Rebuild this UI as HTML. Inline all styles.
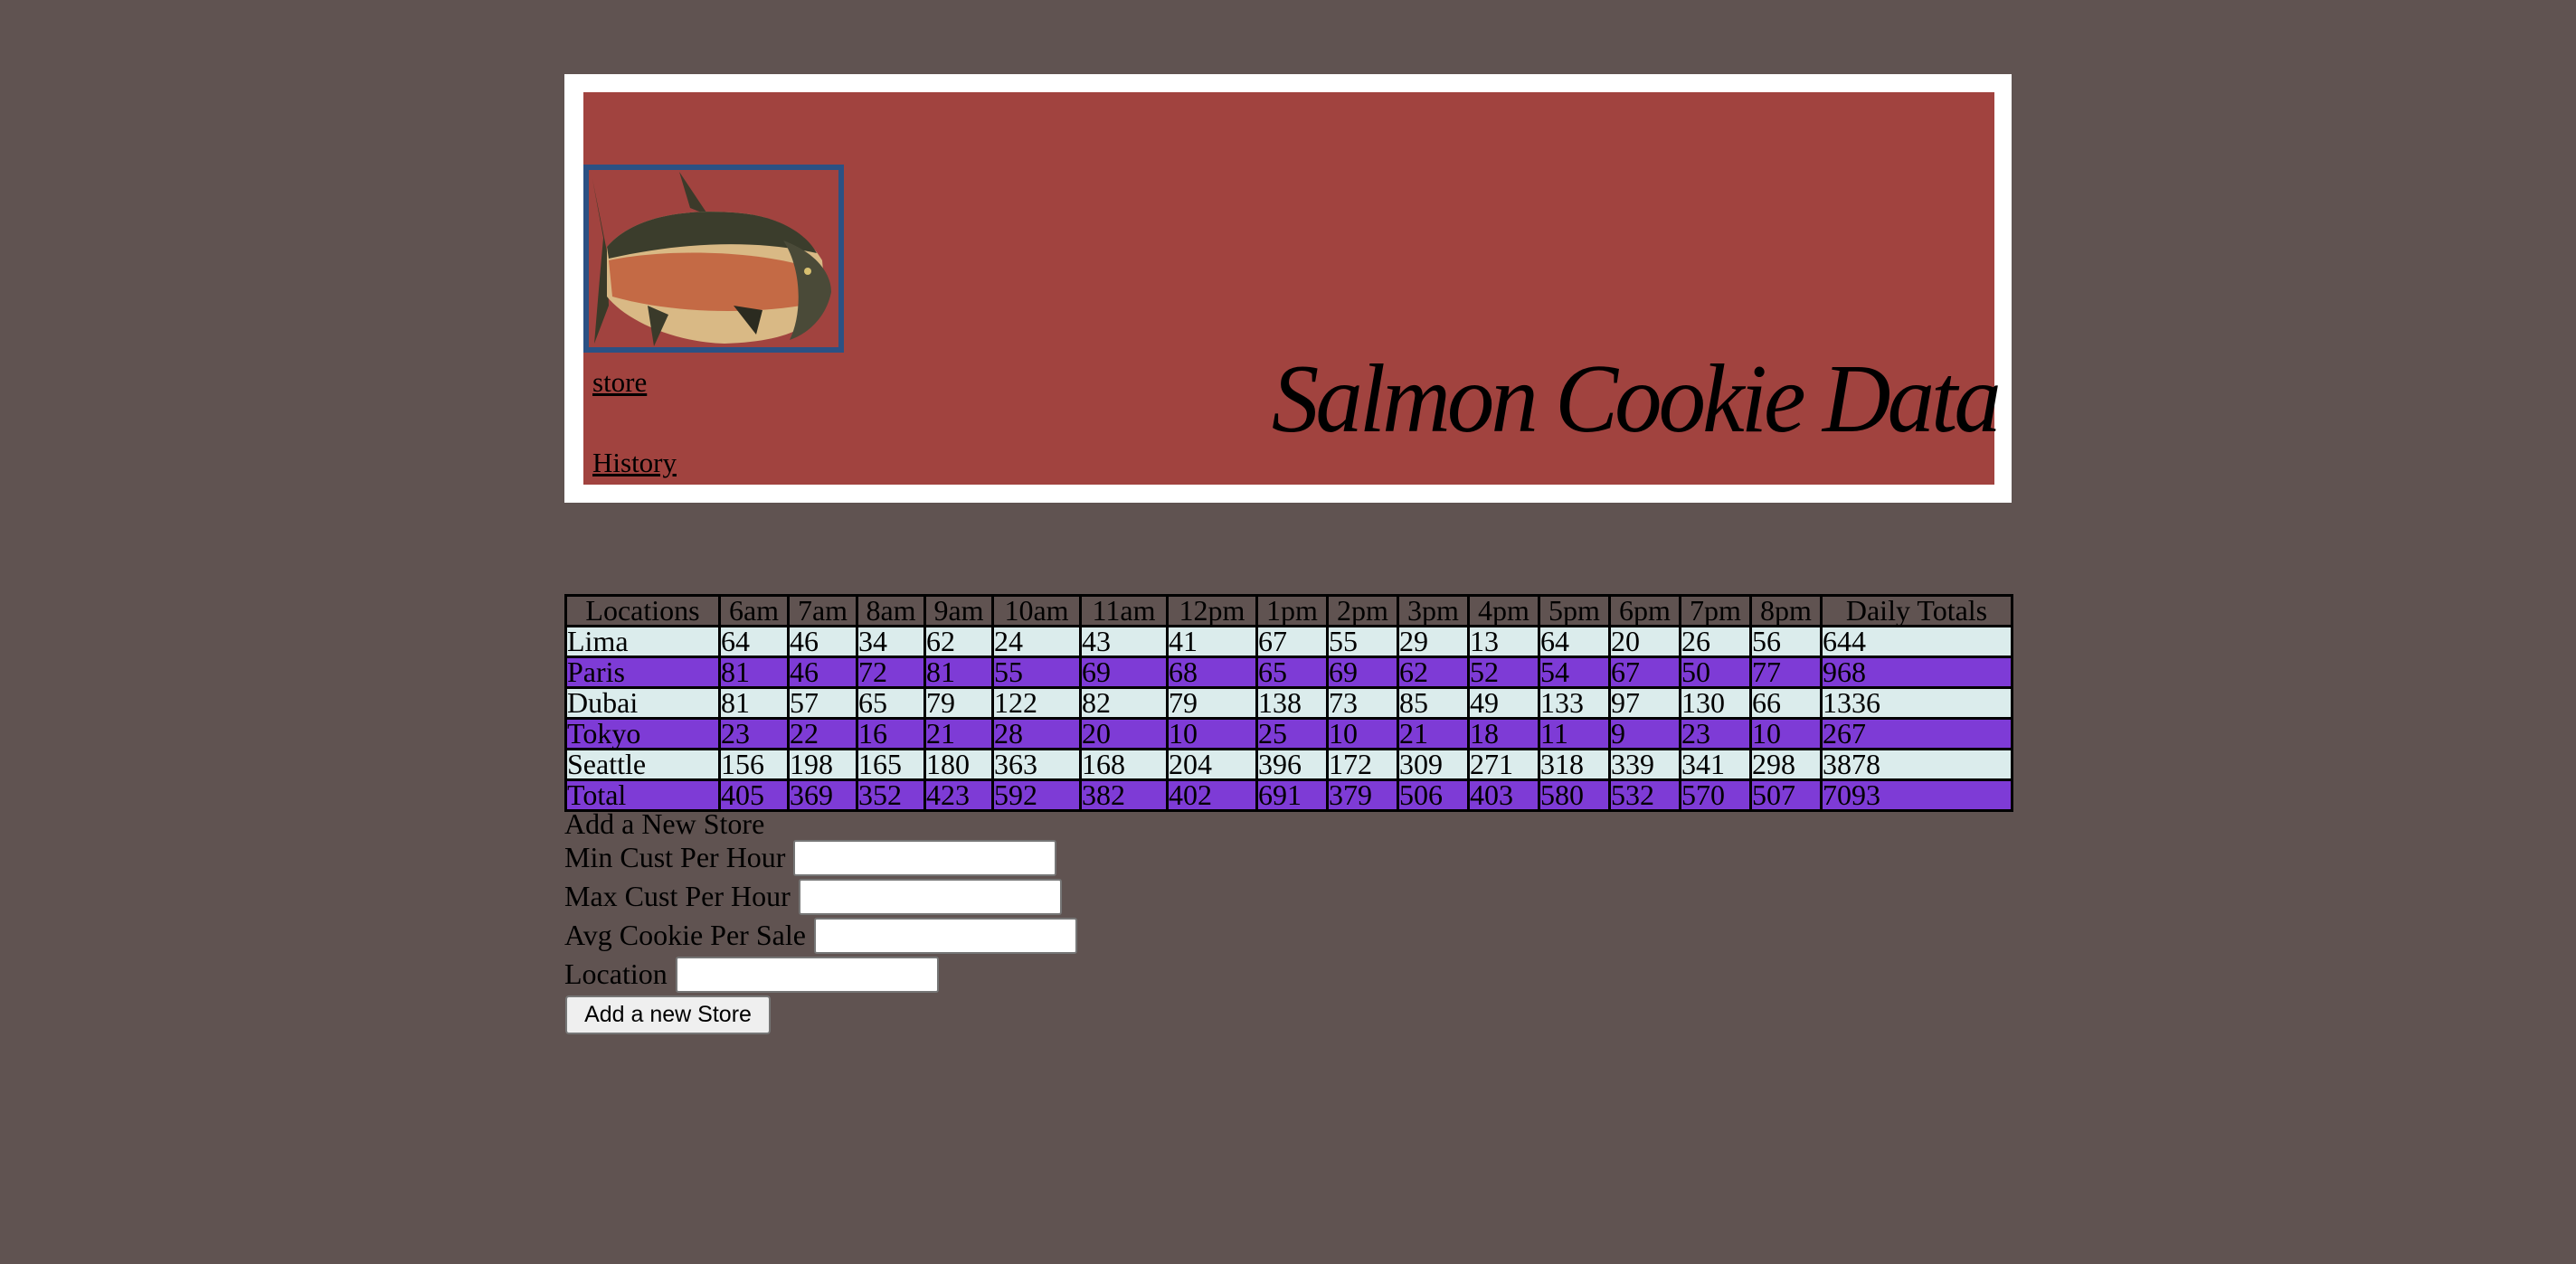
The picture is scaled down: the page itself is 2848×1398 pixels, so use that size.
<!DOCTYPE html>
<html><head><meta charset="utf-8"><style>
html,body{margin:0;padding:0;}
body{width:2848px;height:1398px;background:#605351;position:relative;overflow:hidden;font-family:"Liberation Serif",serif;color:#000;}
#hdr{position:absolute;left:624px;top:82px;width:1600px;height:474px;background:#fff;}
#red{position:absolute;left:21px;top:20px;width:1560px;height:434px;background:#a1433f;}
#fish{position:absolute;left:0;top:80px;width:276px;height:196px;border:6px solid #2b5184;}
.lnk{position:absolute;left:10px;font-size:31px;text-decoration:underline;}
#title{position:absolute;right:-4px;top:278px;font-size:108px;font-style:italic;white-space:nowrap;letter-spacing:-4px;transform:scaleX(0.97);transform-origin:right;}
table{position:absolute;left:624px;top:657px;border-collapse:collapse;table-layout:fixed;width:1600px;font-size:32px;}
td,th{border:3px solid #000;height:31px;padding:0;line-height:31px;text-align:left;font-weight:normal;white-space:nowrap;overflow:hidden;}
th{text-align:center;background:#605351;}
tr.l td{background:#dbecec;}
tr.p td{background:#7e3bd6;}
.f{position:absolute;left:624px;font-size:32px;white-space:nowrap;}
.in{position:absolute;height:36px;width:287px;background:#fff;border:2px solid #767676;border-radius:3px;}
#btn{position:absolute;left:625px;top:1101px;width:223px;height:39px;background:#efefef;border:2px solid #767676;border-radius:4px;font-family:"Liberation Sans",sans-serif;font-size:25px;line-height:39px;text-align:center;}
</style></head><body>
<div id="hdr"><div id="red">
<div id="fish"><svg width="276" height="196" viewBox="0 0 276 196">
<path d="M4 10 L16 75 L12 120 L6 192 L22 150 L20 90 Z" fill="#3a3a28"/>
<path d="M100 2 L112 42 L132 50 Z" fill="#3c3a2a"/>
<path d="M20 85 C50 50 110 42 170 48 C210 52 240 70 258 100 L262 145 C250 175 215 190 150 192 C90 190 40 165 20 140 Z" fill="#d9b985"/>
<path d="M20 85 C50 50 110 42 170 48 C210 52 240 70 252 92 C190 78 110 78 22 98 Z" fill="#3b3d2c"/>
<path d="M22 100 C80 88 170 88 235 105 L235 150 C170 160 90 158 26 140 Z" fill="#c46a45"/>
<path d="M215 78 C248 90 268 112 268 135 C262 165 240 182 222 188 C236 160 236 110 215 78 Z" fill="#4a4a38"/>
<path d="M65 150 L72 195 L88 160 Z" fill="#3a3a2a"/>
<path d="M160 150 L185 182 L192 155 Z" fill="#2b2b20"/>
<circle cx="242" cy="112" r="4" fill="#d8c070"/>
</svg></div>
<div class="lnk" style="top:303px">store</div>
<div class="lnk" style="top:392px">History</div>
<div id="title">Salmon Cookie Data</div>
</div></div>
<table>
<colgroup><col style="width:170px"><col style="width:76px"><col style="width:76px"><col style="width:75px"><col style="width:75px"><col style="width:97px"><col style="width:96px"><col style="width:99px"><col style="width:78px"><col style="width:78px"><col style="width:78px"><col style="width:78px"><col style="width:78px"><col style="width:78px"><col style="width:78px"><col style="width:78px"><col style="width:211px"></colgroup>
<tr><th>Locations</th><th>6am</th><th>7am</th><th>8am</th><th>9am</th><th>10am</th><th>11am</th><th>12pm</th><th>1pm</th><th>2pm</th><th>3pm</th><th>4pm</th><th>5pm</th><th>6pm</th><th>7pm</th><th>8pm</th><th>Daily Totals</th></tr>
<tr class="l"><td>Lima</td><td>64</td><td>46</td><td>34</td><td>62</td><td>24</td><td>43</td><td>41</td><td>67</td><td>55</td><td>29</td><td>13</td><td>64</td><td>20</td><td>26</td><td>56</td><td>644</td></tr>
<tr class="p"><td>Paris</td><td>81</td><td>46</td><td>72</td><td>81</td><td>55</td><td>69</td><td>68</td><td>65</td><td>69</td><td>62</td><td>52</td><td>54</td><td>67</td><td>50</td><td>77</td><td>968</td></tr>
<tr class="l"><td>Dubai</td><td>81</td><td>57</td><td>65</td><td>79</td><td>122</td><td>82</td><td>79</td><td>138</td><td>73</td><td>85</td><td>49</td><td>133</td><td>97</td><td>130</td><td>66</td><td>1336</td></tr>
<tr class="p"><td>Tokyo</td><td>23</td><td>22</td><td>16</td><td>21</td><td>28</td><td>20</td><td>10</td><td>25</td><td>10</td><td>21</td><td>18</td><td>11</td><td>9</td><td>23</td><td>10</td><td>267</td></tr>
<tr class="l"><td>Seattle</td><td>156</td><td>198</td><td>165</td><td>180</td><td>363</td><td>168</td><td>204</td><td>396</td><td>172</td><td>309</td><td>271</td><td>318</td><td>339</td><td>341</td><td>298</td><td>3878</td></tr>
<tr class="p"><td>Total</td><td>405</td><td>369</td><td>352</td><td>423</td><td>592</td><td>382</td><td>402</td><td>691</td><td>379</td><td>506</td><td>403</td><td>580</td><td>532</td><td>570</td><td>507</td><td>7093</td></tr>
</table>
<div class="f" style="top:893px">Add a New Store</div>
<div class="f" style="top:930px">Min Cust Per Hour</div><div class="in" style="left:877px;top:929px"></div>
<div class="f" style="top:973px">Max Cust Per Hour</div><div class="in" style="left:883px;top:972px"></div>
<div class="f" style="top:1016px">Avg Cookie Per Sale</div><div class="in" style="left:900px;top:1015px"></div>
<div class="f" style="top:1059px">Location</div><div class="in" style="left:747px;top:1058px"></div>
<div id="btn">Add a new Store</div>
</body></html>
